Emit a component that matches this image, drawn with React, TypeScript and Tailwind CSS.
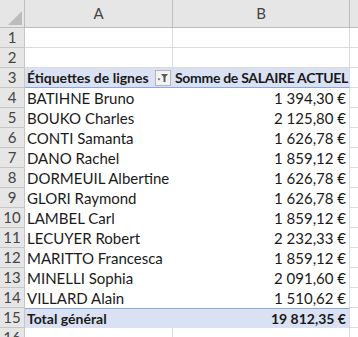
import React from 'react';

const rows: [string, string][] = [
  ['BATIHNE Bruno', '1 394,30 €'],
  ['BOUKO Charles', '2 125,80 €'],
  ['CONTI Samanta', '1 626,78 €'],
  ['DANO Rachel', '1 859,12 €'],
  ['DORMEUIL Albertine', '1 626,78 €'],
  ['GLORI Raymond', '1 626,78 €'],
  ['LAMBEL Carl', '1 859,12 €'],
  ['LECUYER Robert', '2 232,33 €'],
  ['MARITTO Francesca', '1 859,12 €'],
  ['MINELLI Sophia', '2 091,60 €'],
  ['VILLARD Alain', '1 510,62 €'],
];

function FilterButton() {
  return (
    <span className="flex h-[16px] w-[16px] shrink-0 items-center justify-center border border-[#b5b5b5] bg-[#f3f3f3]">
      <svg width="12" height="10" viewBox="0 0 12 10">
        <path d="M4 1h7L8.5 4v5H6.5V4z" fill="#5a5a5a" />
        <path d="M0.5 5.5h3l-1.5 2z" fill="#5a5a5a" />
      </svg>
    </span>
  );
}

function RowNum({ n }: { n: number }) {
  return (
    <div className="flex w-[25px] shrink-0 items-center justify-center border-r border-b border-[#c6c6c6] bg-[#e6e6e6] text-[15px] font-normal text-[#444]">
      {n}
    </div>
  );
}

export default function App() {
  return (
    <div
      className="h-[337px] w-[358px] overflow-hidden bg-white text-[15px] leading-none text-[#1a1a1a]"
      style={{ fontFamily: 'Lato, "Liberation Sans", sans-serif' }}
    >
      {/* column headers */}
      <div className="flex h-[28px] bg-[#e6e6e6] text-[#444]">
        <div className="relative w-[25px] shrink-0 border-r border-b border-[#bdbdbd]">
          <svg className="absolute right-[2px] bottom-[2px]" width="14" height="14" viewBox="0 0 14 14">
            <path d="M14 0v14H0z" fill="#bcbcbc" />
          </svg>
        </div>
        <div className="flex w-[148px] shrink-0 items-center justify-center border-r border-b border-[#bdbdbd]">A</div>
        <div className="flex w-[177px] shrink-0 items-center justify-center border-r border-b border-[#bdbdbd]">B</div>
        <div className="flex-1 border-b border-[#bdbdbd]" />
      </div>

      {[1, 2].map(n => (
        <div key={n} className="flex h-[20px]">
          <RowNum n={n} />
          <div className="w-[148px] shrink-0 border-r border-b border-[#dadada]" />
          <div className="w-[177px] shrink-0 border-r border-b border-[#dadada]" />
          <div className="flex-1 border-b border-[#dadada]" />
        </div>
      ))}

      <div className="flex h-[20px] whitespace-nowrap text-[14px] font-bold">
        <RowNum n={3} />
        <div className="flex w-[148px] shrink-0 items-center justify-between border-b border-[#8ea9db] bg-[#d9e1f2] pl-[2px] pr-[2px]">
          <span>Étiquettes de lignes</span>
          <FilterButton />
        </div>
        <div className="flex w-[177px] shrink-0 items-center overflow-hidden border-r border-b border-r-[#dadada] border-b-[#8ea9db] bg-[#d9e1f2] pl-[2px] tracking-[-0.3px]">
          Somme de SALAIRE ACTUEL
        </div>
        <div className="flex-1 border-b border-[#dadada]" />
      </div>

      {rows.map(([name, val], i) => (
        <div key={name} className="flex h-[20px] whitespace-nowrap">
          <RowNum n={i + 4} />
          <div className="flex w-[148px] shrink-0 items-center pl-[2px]">
            {name}
          </div>
          <div className="flex w-[177px] shrink-0 items-center justify-end border-r border-[#dadada] pr-[3px]">
            {val}
          </div>
          <div className="flex-1 border-b border-[#dadada]" />
        </div>
      ))}

      <div className="flex h-[20px] whitespace-nowrap text-[14px] font-bold">
        <RowNum n={15} />
        <div className="flex w-[148px] shrink-0 items-center border-t border-[#8ea9db] bg-[#d9e1f2] pl-[2px]">
          Total général
        </div>
        <div className="flex w-[177px] shrink-0 items-center justify-end border-t border-r border-t-[#8ea9db] border-r-[#dadada] bg-[#d9e1f2] pr-[3px]">
          19 812,35 €
        </div>
        <div className="flex-1 border-b border-[#dadada]" />
      </div>

      <div className="flex h-[20px]">
        <RowNum n={16} />
        <div className="w-[148px] shrink-0 border-r border-b border-[#dadada]" />
        <div className="w-[177px] shrink-0 border-r border-b border-[#dadada]" />
        <div className="flex-1 border-b border-[#dadada]" />
      </div>
    </div>
  );
}
